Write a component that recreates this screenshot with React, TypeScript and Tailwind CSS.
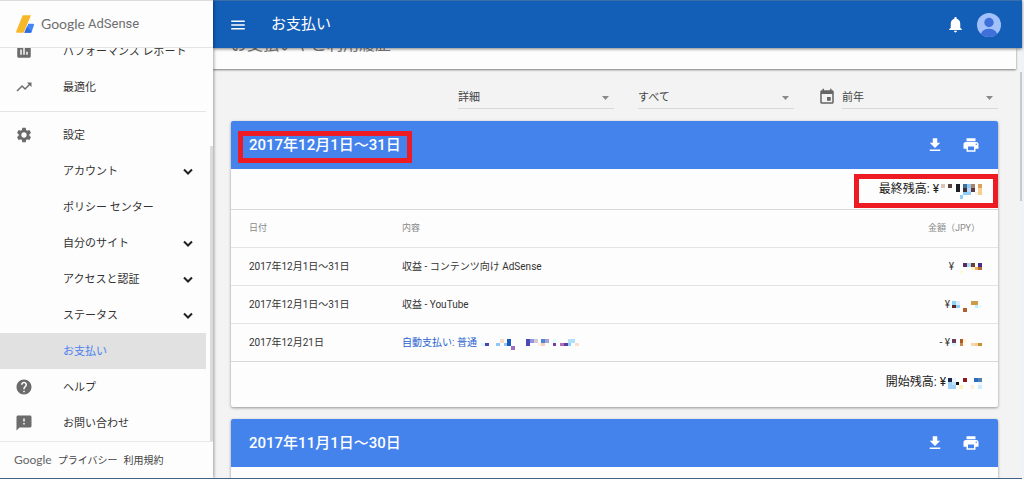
import { ReactNode } from 'react';
import { IconType } from 'react-icons';
import {
  MdAssessment,
  MdEvent,
  MdFeedback,
  MdFileDownload,
  MdHelp,
  MdMenu,
  MdNotifications,
  MdPrint,
  MdSettings,
  MdTrendingUp,
} from 'react-icons/md';

// 1. TYPES
type Cell = [number, number, string];

interface NavItem {
  label: string;
  icon?: IconType;
  expandable?: boolean;
  active?: boolean;
}

interface Masked {
  cols: number;
  cells: Cell[];
}

interface Row {
  date: string;
  text: string;
  link?: Masked;
  sign: string;
  amount: Masked;
}

// 2. DATA
const reportItems: NavItem[] = [
  { label: 'パフォーマンス レポート', icon: MdAssessment },
  { label: '最適化', icon: MdTrendingUp },
];

const settingItems: NavItem[] = [
  { label: '設定', icon: MdSettings },
  { label: 'アカウント', expandable: true },
  { label: 'ポリシー センター' },
  { label: '自分のサイト', expandable: true },
  { label: 'アクセスと認証', expandable: true },
  { label: 'ステータス', expandable: true },
  { label: 'お支払い', active: true },
  { label: 'ヘルプ', icon: MdHelp },
  { label: 'お問い合わせ', icon: MdFeedback },
];

const closingBalance: Masked = {
  cols: 11,
  cells: [
    [0, 0, '#d9c4bc'], [2, 0, '#5a4038'], [4, 0, '#1d2024'], [6, 0, '#3f6f92'],
    [7, 0, '#8fc7f5'], [8, 0, '#a88468'], [10, 0, '#dda05a'], [4, 1, '#1d2024'],
    [6, 1, '#38303a'], [7, 1, '#b8d8f8'], [8, 1, '#5a3a44'], [10, 1, '#f5cf90'],
    [6, 2, '#8fcdfb'], [7, 2, '#8fcdfb'], [9, 2, '#fdf3e4'], [10, 2, '#f5cf90'],
    [5, 3, '#8fcdfb'],
  ],
};

const openingBalance: Masked = {
  cols: 9,
  cells: [
    [0, 0, '#20284a'], [1, 0, '#e8f4ff'], [4, 0, '#8a1a28'], [7, 0, '#2a6cc0'],
    [8, 0, '#5080b0'], [0, 1, '#9fd0f5'], [1, 1, '#c8e0f8'], [2, 1, '#111111'],
    [8, 1, '#eaf6ff'], [0, 2, '#a0d0f5'], [1, 2, '#a0d0f5'], [3, 2, '#fff0c0'],
    [6, 2, '#fff0d0'], [8, 2, '#d0ecff'],
  ],
};

const rows: Row[] = [
  {
    date: '2017年12月1日～31日',
    text: '収益 - コンテンツ向け AdSense',
    sign: '¥',
    amount: {
      cols: 7,
      cells: [
        [2, 0, '#5e2a5c'], [3, 0, '#a8d8f8'], [4, 0, '#6e4030'], [6, 0, '#4a2a90'],
        [4, 1, '#fff3c8'], [5, 1, '#f0b060'], [6, 1, '#b86a30'], [1, 2, '#fff8dc'],
      ],
    },
  },
  {
    date: '2017年12月1日～31日',
    text: '収益 - YouTube',
    sign: '¥',
    amount: {
      cols: 8,
      cells: [
        [0, 0, '#8fd0fb'], [1, 0, '#d8f0ff'], [5, 0, '#d09a4a'], [6, 0, '#d09a4a'],
        [0, 1, '#5a2828'], [1, 1, '#8fd0fb'], [6, 1, '#c0ecff'], [7, 1, '#e8fbff'],
        [3, 2, '#b06030'],
      ],
    },
  },
  {
    date: '2017年12月21日',
    text: '自動支払い: 普通',
    link: {
      cols: 26,
      cells: [
        [0, 1, '#d8fbff'], [1, 1, '#5040b0'], [4, 1, '#8fc8f5'], [5, 0, '#f8dcc8'],
        [6, 1, '#90c8f0'], [7, 0, '#1a5cc0'], [7, 1, '#1a5cc0'], [8, 2, '#a070c0'],
        [12, 0, '#5048b8'], [12, 1, '#5048b8'], [13, 0, '#8f98d8'], [14, 0, '#d8c8d8'],
        [15, 1, '#fbf0e0'], [16, 0, '#4a88d0'], [16, 1, '#f5d0c0'], [17, 0, '#a8a0d8'],
        [19, 0, '#e0fbff'], [19, 1, '#7040a8'], [21, 1, '#b070b8'], [22, 1, '#6038a8'],
        [23, 0, '#b0e0fb'], [23, 1, '#80d8f8'], [24, 0, '#b0e0fb'], [25, 1, '#f8e0d0'],
      ],
    },
    sign: '- ¥',
    amount: {
      cols: 8,
      cells: [
        [0, 0, '#6b3a60'], [2, 0, '#a85a28'], [3, 0, '#fff8dc'], [0, 1, '#d8f8ff'],
        [2, 1, '#c98a4a'], [5, 1, '#f5d8a8'], [6, 1, '#f0cf98'], [7, 1, '#c89030'],
      ],
    },
  },
];

// 3. COMPONENTS
function Mosaic({ cols, cells }: Masked) {
  // at least three lines so that every row of the table sits alike
  const lines = Math.max(3, ...cells.map(([, y]) => y + 1));
  return (
    <svg
      className="mt-1 inline-block shrink-0 align-middle"
      width={Math.round(cols * 3.75)}
      height={Math.round(lines * 3.75)}
      viewBox={`0 0 ${cols} ${lines}`}
      preserveAspectRatio="none"
      shapeRendering="crispEdges"
      aria-hidden="true"
    >
      {cells.map(([x, y, color]) => (
        <rect key={`${x}-${y}`} x={x} y={y} width={1} height={1} fill={color} />
      ))}
    </svg>
  );
}

function AdSenseLogo() {
  return (
    <svg className="h-[18px] w-[18px]" viewBox="0 0 54 54" aria-hidden="true">
      <path d="M20 1h25L23 53H3q-4 0-2-5z" fill="#f6b829" />
      <path d="M37 26h14q4 0 3 4l-7 20q-1 3-4 3H25z" fill="#4285f4" />
      <path d="M25 53l8-18 14 15q-1 3-4 3z" fill="#2f6fdc" />
    </svg>
  );
}

function Avatar() {
  return (
    <svg className="h-6 w-6" viewBox="0 0 24 24" aria-hidden="true">
      <clipPath id="avatar">
        <circle cx="12" cy="12" r="12" />
      </clipPath>
      <g clipPath="url(#avatar)">
        <rect width="24" height="24" fill="#a2c1fa" />
        <circle cx="12" cy="9.5" r="4.7" fill="#3f70da" />
        <path d="M4 24v-3.500Q6 15.800 12 15.800t8 4.700V24z" fill="#3f70da" />
      </g>
    </svg>
  );
}

function Chevron() {
  return (
    <svg className="h-[18px] w-[18px] text-[#222]" viewBox="0 0 18 18" fill="none" aria-hidden="true">
      <path d="M5 7.500l4 4 4-4" stroke="currentColor" strokeWidth={2} />
    </svg>
  );
}

function NavRow({ item }: { item: NavItem }) {
  const Icon = item.icon;
  return (
    <li className={item.active ? 'bg-[#e1e1e1]' : ''}>
      <a
        href="#"
        className={`flex h-9 items-center pl-[15px] pr-[9px] text-[11px] ${
          item.active ? 'text-[#4a80f0]' : 'text-[#333]'
        }`}
      >
        <span className="w-12 shrink-0 text-[#6b6b6b]">{Icon && <Icon size={18} />}</span>
        <span className="flex-1 whitespace-nowrap pt-[2px]">{item.label}</span>
        {item.expandable && <Chevron />}
      </a>
    </li>
  );
}

function Sidebar() {
  return (
    <aside className="z-20 flex w-[213px] shrink-0 flex-col border-t border-[#ddd] bg-[#fdfdfd] shadow-[1px_0_3px_rgba(0,0,0,0.35)]">
      <div className="flex h-[47px] shrink-0 items-center border-b border-[#e4e4e4] pl-4 text-[#6e6e6e]">
        <AdSenseLogo />
        <span className="ml-[7px] font-['Lato',sans-serif] text-sm">Google</span>
        <span className="ml-[3px] text-[13px]">AdSense</span>
      </div>
      <div className="relative min-h-0 flex-1 overflow-hidden">
        <nav className="-mt-[15px] mr-[7px]">
          <ul className="mb-[5px] border-b border-[#e4e4e4] pb-[6px]">
            {reportItems.map((item) => (
              <NavRow key={item.label} item={item} />
            ))}
          </ul>
          <ul>
            {settingItems.map((item) => (
              <NavRow key={item.label} item={item} />
            ))}
          </ul>
        </nav>
        {/* scroll thumb */}
        <div className="absolute bottom-0 right-0 h-3/4 w-[3px] bg-[#dcdcdc]" />
      </div>
      <footer className="flex h-[37px] shrink-0 items-center gap-[6px] border-t border-[#e8e8e8] pl-[14px] text-[10px] text-[#444]">
        <span className="font-['Lato',sans-serif] text-xs text-[#666]">Google</span>
        <a href="#">プライバシー</a>
        <a href="#">利用規約</a>
      </footer>
    </aside>
  );
}

function TopBar() {
  return (
    <header className="z-10 flex h-12 shrink-0 items-center border-t border-[#3a6ea8] bg-[#135eb7] pl-4 pr-[21px] text-white shadow-[0_1px_3px_rgba(0,0,0,0.5)]">
      <button type="button" aria-label="メニュー">
        <MdMenu size={18} />
      </button>
      <span className="ml-6 flex-1 text-[15px]">お支払い</span>
      <button type="button" aria-label="通知">
        <MdNotifications size={19} />
      </button>
      <button type="button" aria-label="アカウント" className="ml-3">
        <Avatar />
      </button>
    </header>
  );
}

function FilterSelect({ label, value }: { label: string; value: string }) {
  return (
    <div className="relative w-[156px]">
      <select
        aria-label={label}
        className="block h-6 w-full appearance-none border-b border-[#d8d8d8] bg-transparent pt-1 text-[11px] text-[#444] outline-none"
      >
        <option>{value}</option>
      </select>
      <svg
        className="pointer-events-none absolute right-[5px] top-[11px] h-1 w-[7px] text-[#8a8a8a]"
        viewBox="0 0 7 4"
        aria-hidden="true"
      >
        <path d="M0 0h7L3.500 4z" fill="currentColor" />
      </svg>
    </div>
  );
}

function StatementCard({ title, marked, children }: { title: string; marked?: boolean; children?: ReactNode }) {
  return (
    <section className="rounded-[2px] bg-[#fdfdfd] shadow-[0_1px_3px_rgba(0,0,0,0.4)]">
      <div className="flex h-12 items-center gap-[18px] rounded-t-[2px] bg-[#4583ec] px-[18px] text-white">
        <div className="flex flex-1">
          <h2 className="relative text-[15px] font-medium">
            {title}
            {marked && (
              <span className="absolute -inset-x-[11px] -bottom-[7px] -top-[3px] border-[5px] border-[#ed1c24]" />
            )}
          </h2>
        </div>
        <button type="button" aria-label="ダウンロード">
          <MdFileDownload size={18} />
        </button>
        <button type="button" aria-label="印刷">
          <MdPrint size={18} />
        </button>
      </div>
      {children}
    </section>
  );
}

function Statement() {
  return (
    <>
      <div className="relative flex h-10 items-center justify-end px-4 text-xs text-[#222]">
        <span className="mr-[2px]">最終残高: ¥</span>
        <Mosaic {...closingBalance} />
        <span className="absolute right-0 top-[5px] h-[34px] w-36 border-[5px] border-[#ed1c24]" />
      </div>
      <table className="w-full table-fixed border-y border-[#d8d8d8] text-left text-[10px] text-[#333]">
        <thead>
          <tr className="h-[38px] text-[9px] text-[#888]">
            <th className="w-[171px] pl-[18px] font-normal">日付</th>
            <th className="font-normal">内容</th>
            <th className="w-[171px] pr-[18px] text-right font-normal">金額（JPY）</th>
          </tr>
        </thead>
        <tbody>
          {rows.map((row) => (
            <tr key={row.text} className="h-[38px] border-t border-[#e4e4e4]">
              <td className="pl-[18px]">{row.date}</td>
              <td>
                {row.link ? (
                  <a href="#" className="text-[#2a62d0]">
                    <span className="mr-1">{row.text}</span>
                    <Mosaic {...row.link} />
                  </a>
                ) : (
                  row.text
                )}
              </td>
              <td className="pr-4 text-right">
                <span className="mr-[2px]">{row.sign}</span>
                <Mosaic {...row.amount} />
              </td>
            </tr>
          ))}
        </tbody>
      </table>
      <div className="flex h-[45px] items-center justify-end px-4 pb-[6px] text-xs text-[#222]">
        <span className="mr-[2px]">開始残高: ¥</span>
        <Mosaic {...openingBalance} />
      </div>
    </>
  );
}

export default function App() {
  return (
    <div className="flex h-screen flex-col overflow-hidden bg-[#eef3fb] pr-[2px] font-['Roboto','Noto_Sans_CJK_JP',sans-serif]">
      <div className="flex min-h-0 flex-1">
        <Sidebar />
        <div className="flex min-w-0 flex-1 flex-col bg-[#f3f3f3]">
          <TopBar />
          <main className="relative min-h-0 flex-1 overflow-hidden">
            <div className="mr-[6px] flex h-[21px] items-start bg-[#fdfdfd] pl-[18px] shadow-[0_1px_2px_rgba(0,0,0,0.5)]">
              <h1 className="-mt-[13px] text-base leading-5 text-[#777]">お支払いやご利用履歴</h1>
            </div>
            <div className="pl-[18px] pr-6">
              <div className="flex items-center justify-end gap-6 pb-3 pt-4">
                <FilterSelect label="表示" value="詳細" />
                <FilterSelect label="種類" value="すべて" />
                <div className="flex items-center gap-[6px]">
                  <MdEvent size={18} className="text-[#666]" />
                  <FilterSelect label="期間" value="前年" />
                </div>
              </div>
              <div className="flex flex-col gap-3">
                <StatementCard title="2017年12月1日～31日" marked>
                  <Statement />
                </StatementCard>
                <StatementCard title="2017年11月1日～30日">
                  <div className="h-10" />
                </StatementCard>
              </div>
            </div>
            {/* scroll thumb */}
            <div className="absolute right-0 top-6 h-[30%] w-[2px] bg-[#c8c8c8]" />
          </main>
        </div>
      </div>
      <div className="z-30 h-px shrink-0 bg-[#3f6285]" />
    </div>
  );
}
